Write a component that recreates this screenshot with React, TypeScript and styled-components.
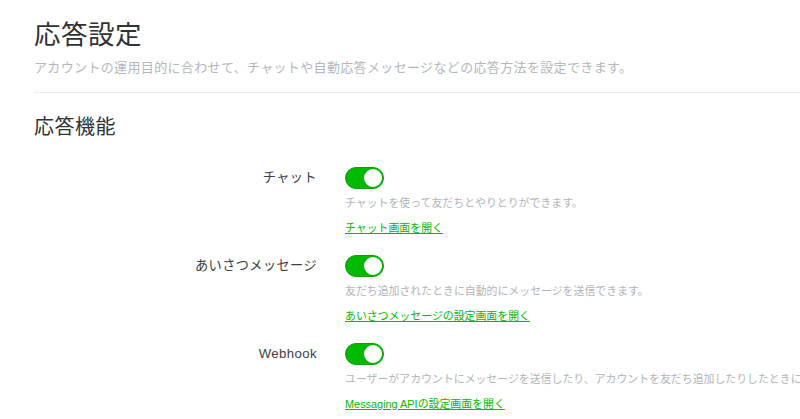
import React from 'react';
import styled, { createGlobalStyle } from 'styled-components';

const GlobalStyle = createGlobalStyle`
  html, body {
    margin: 0;
    padding: 0;
    background: #ffffff;
    overflow: hidden;
  }
  body {
    font-family: 'Liberation Sans', 'Noto Sans CJK JP', sans-serif;
  }
`;

type Feature = {
  label: string;
  description: string;
  link: string;
};

const features: Feature[] = [
  {
    label: 'チャット',
    description: 'チャットを使って友だちとやりとりができます。',
    link: 'チャット画面を開く'
  },
  {
    label: 'あいさつメッセージ',
    description: '友だち追加されたときに自動的にメッセージを送信できます。',
    link: 'あいさつメッセージの設定画面を開く'
  },
  {
    label: 'Webhook',
    description: 'ユーザーがアカウントにメッセージを送信したり、アカウントを友だち追加したりしたときに',
    link: 'Messaging APIの設定画面を開く'
  }
];

const App = () => {
  return (
    <>
      <GlobalStyle />
      <Page>
        <Header>
          <Title>応答設定</Title>
          <Lead>アカウントの運用目的に合わせて、チャットや自動応答メッセージなどの応答方法を設定できます。</Lead>
        </Header>
        <Section>
          <SectionTitle>応答機能</SectionTitle>
          <Rows>
            {features.map((f) => (
              <Row key={f.label}>
                <Label>{f.label}</Label>
                <Body>
                  <Toggle $on>
                    <Knob $on />
                  </Toggle>
                  <Description>{f.description}</Description>
                  <Link href='#'>{f.link}</Link>
                </Body>
              </Row>
            ))}
          </Rows>
        </Section>
      </Page>
    </>
  );
};

export default App;

const Page = styled.div`
  padding-left: 34px;
  width: 766px;
  height: 419px;
  overflow: hidden;
`;

const Header = styled.header`
  padding-top: 17px;
  padding-bottom: 14px;
  border-bottom: 1px solid #ececec;
  margin-right: -40px;
`;

const Title = styled.h1`
  margin: 0;
  font-size: 26.5px;
  line-height: 36px;
  font-weight: 400;
  color: #2f3236;
  letter-spacing: 0.5px;
`;

const Lead = styled.p`
  margin: 5px 0 0;
  font-size: 13px;
  line-height: 20px;
  letter-spacing: 0.35px;
  color: #b3b8be;
  white-space: nowrap;
`;

const Section = styled.section`
  padding-top: 20px;
`;

const SectionTitle = styled.h2`
  margin: 0;
  font-size: 20px;
  line-height: 28px;
  font-weight: 400;
  color: #2f3236;
  letter-spacing: 0.5px;
`;

const Rows = styled.div`
  display: flex;
  flex-direction: column;
  gap: 19px;
  margin-top: 26px;
`;

const Row = styled.div`
  display: grid;
  grid-template-columns: 283px 1fr;
  column-gap: 28px;
`;

const Label = styled.div`
  text-align: right;
  font-size: 13.2px;
  line-height: 22px;
  letter-spacing: 0.4px;
  color: #3d4044;
  white-space: nowrap;
`;

const Body = styled.div`
  display: flex;
  flex-direction: column;
  align-items: flex-start;
  min-width: 0;
`;

const Toggle = styled.div<{ $on?: boolean }>`
  position: relative;
  box-sizing: border-box;
  width: 39px;
  height: 22px;
  border-radius: 11px;
  background: ${(p) => (p.$on ? '#00b900' : '#dcdfe3')};
  border: 1px solid ${(p) => (p.$on ? '#03a603' : '#cfd3d8')};
`;

const Knob = styled.span<{ $on?: boolean }>`
  position: absolute;
  top: 1px;
  ${(p) => (p.$on ? 'right: 1px;' : 'left: 1px;')}
  width: 18px;
  height: 18px;
  border-radius: 50%;
  background: #ffffff;
`;

const Description = styled.p`
  margin: 6px 0 0;
  font-size: 10.9px;
  line-height: 16px;
  color: #b0b5ba;
  white-space: nowrap;
`;

const Link = styled.a`
  margin-top: 9px;
  font-size: 10.9px;
  line-height: 16px;
  color: #00b900;
  text-decoration: underline;
  white-space: nowrap;
`;
